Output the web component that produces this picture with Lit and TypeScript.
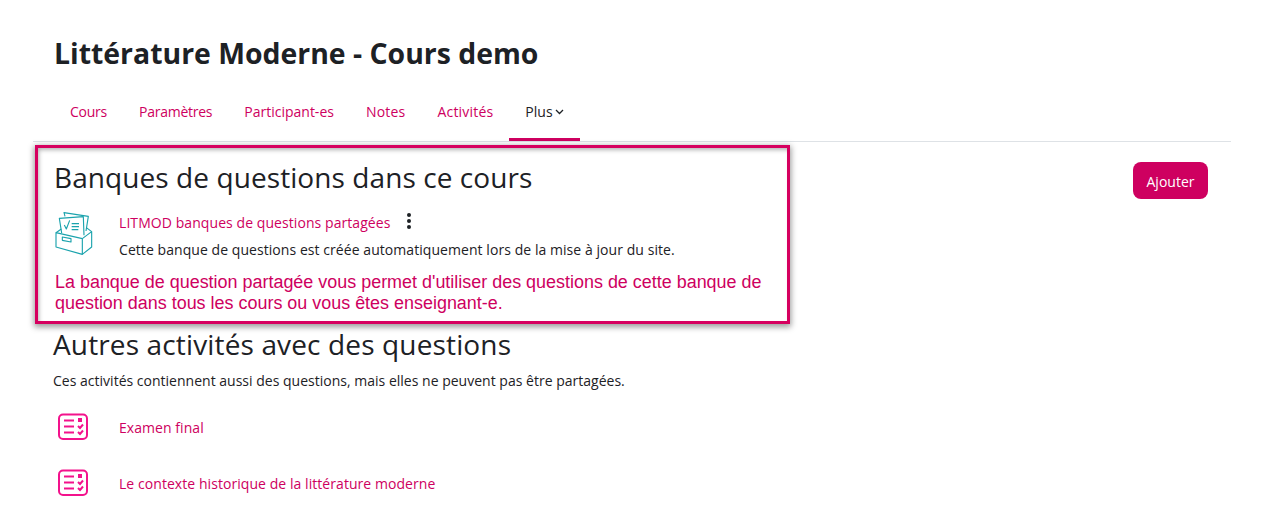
import { LitElement, html, css, svg } from "lit";
import { customElement } from "lit/decorators.js";

const quizIcon = svg`<svg width="32" height="28" viewBox="0 0 32 28" fill="none" stroke="#f3128c" stroke-width="2"><rect x="2" y="1.500" width="28" height="24.500" rx="4"/><path d="M7 7.500h10M7 13.500h10M7 19.500h10"/><rect x="21.500" y="5.500" width="3" height="3" fill="#f3128c" stroke-width="1"/><path d="M21 13l2 2 3-3.500M21 19l2 2 3-3.500" stroke-width="2"/></svg>`;

const bankIcon = svg`<svg width="40" height="45" viewBox="27 20 120 135" fill="none" stroke="#1ba3ad" stroke-width="3.400" stroke-linejoin="round"><path d="M60 36L57 25l73 11-7 44"/><path d="M50 86L43 42l72-5 2 56"/><path d="M58 62l6 12 10-26M80 58h22M80 67h22M80 76h20"/><path d="M33 85L112 103V150L33 128Z"/><path d="M112 103L140 82V128L112 150"/><path d="M33 85L49 74M124 70L140 82"/><path d="M52 98L78 103V113L52 108Z"/></svg>`;

@customElement("app-root")
export class AppRoot extends LitElement {
  static styles = css`
    :host { display: block; height: 513px; overflow: hidden; background: #fff; color: #1d2125; font-family: "Open Sans", sans-serif; font-size: 14px; }
    a { color: #ce0060; text-decoration: none; }
    .page { padding: 0 30px 0 33px; }
    .title { margin: 0; padding: 31px 0 0 21px; font-size: 28.4px; line-height: 44px; font-weight: 700; }
    .nav { display: flex; height: 66px; padding-left: 21px; border-bottom: 1px solid #dee2e6; }
    .tab { padding: 10px 16px 0; height: 53px; display: flex; align-items: center; gap: 2px; }
    .tab.tight { letter-spacing: -0.25px; }
    .tab.loose { letter-spacing: 0.2px; }
    .tab.active { color: #1d2125; border-bottom: 3px solid #ce0060; }
    .tab svg { margin-top: 1px; }
    .main { display: flex; justify-content: space-between; align-items: flex-start; }
    .box { width: 755px; box-sizing: border-box; height: 179px; margin: 3px 0 0 2px; padding: 11px 16px 0 16px; border: 3px solid #d6005f; box-shadow: 0 2px 6px 1px rgba(0,0,0,.4), inset 2px 3px 4px -1px rgba(0,0,0,.3); }
    h2 { margin: 0; font-size: 28px; line-height: 36px; font-weight: 400; letter-spacing: 0.08px; }
    .bank { display: flex; margin-top: 15px; }
    .bank .ic { width: 65px; margin-top: 1px; flex: none; }
    .bank-title { display: flex; align-items: center; gap: 17px; height: 24px; letter-spacing: 0.07px; }
    .bank-desc { margin-top: 5px; line-height: 22px; letter-spacing: 0.06px; }
    .dots { display: flex; flex-direction: column; gap: 2px; margin-top: -2px; }
    .dots i { width: 4px; height: 4px; border-radius: 50%; background: #1d2125; }
    .note { margin: 11px 0 0 1px; font-family: "Liberation Sans", sans-serif; font-size: 17.95px; line-height: 21px; color: #ce0060; }
    .add { margin: 20px 23px 0 0; padding-top: 1px; box-sizing: border-box; width: 75px; height: 37px; display: flex; align-items: center; justify-content: center; background: #ce0060; color: #fff; border-radius: 8px; }
    .others { padding-left: 20px; }
    .others h2 { margin-top: 2px; letter-spacing: 0.14px; }
    .others p { margin: 8px 0 0; line-height: 22px; letter-spacing: 0.01px; }
    .act { display: flex; align-items: center; height: 56px; letter-spacing: 0.06px; }
    .act .ic { width: 66px; padding-left: 4px; box-sizing: border-box; display: flex; }
    .list { margin-top: 7px; }
  `;

  render() {
    return html`
      <div class="page">
        <h1 class="title">Littérature Moderne - Cours demo</h1>
        <nav class="nav">
          <a class="tab tight" href="#">Cours</a>
          <a class="tab tight" href="#">Paramètres</a>
          <a class="tab" href="#">Participant-es</a>
          <a class="tab loose" href="#">Notes</a>
          <a class="tab loose" href="#">Activités</a>
          <a class="tab active" href="#">Plus
            <svg width="9" height="6" viewBox="0 0 9 6" fill="none" stroke="#1d2125" stroke-width="1.300"><path d="M1 1l3.500 3.500L8 1"/></svg>
          </a>
        </nav>
        <div class="main">
          <section class="box">
            <h2>Banques de questions dans ce cours</h2>
            <div class="bank">
              <div class="ic">${bankIcon}</div>
              <div>
                <div class="bank-title">
                  <a href="#">LITMOD banques de questions partagées</a>
                  <span class="dots"><i></i><i></i><i></i></span>
                </div>
                <div class="bank-desc">Cette banque de questions est créée automatiquement lors de la mise à jour du site.</div>
              </div>
            </div>
            <div class="note">La banque de question partagée vous permet d'utiliser des questions de cette banque de question dans tous les cours ou vous êtes enseignant-e.</div>
          </section>
          <a class="add" href="#">Ajouter</a>
        </div>
        <section class="others">
          <h2>Autres activités avec des questions</h2>
          <p>Ces activités contiennent aussi des questions, mais elles ne peuvent pas être partagées.</p>
          <div class="list">
            <div class="act"><span class="ic">${quizIcon}</span><a href="#">Examen final</a></div>
            <div class="act"><span class="ic">${quizIcon}</span><a href="#">Le contexte historique de la littérature moderne</a></div>
          </div>
        </section>
      </div>
    `;
  }
}
